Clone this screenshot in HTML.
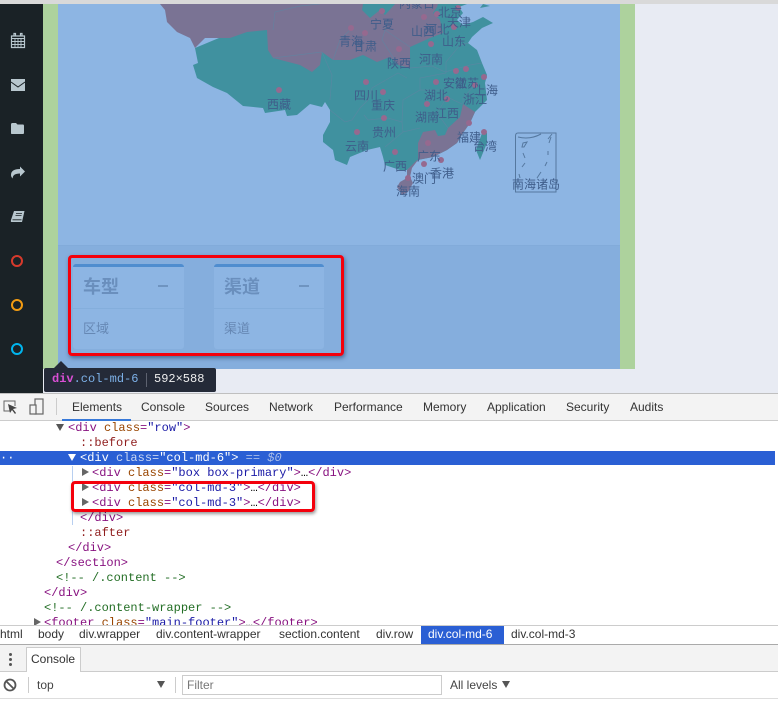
<!DOCTYPE html>
<html><head><meta charset="utf-8"><style>
html,body{margin:0;padding:0;background:#fff}
#p{position:relative;width:778px;height:708px;overflow:hidden;background:#fff;font-family:"Liberation Sans","Noto Sans CJK SC",sans-serif}
#p div,#p span.a,#p svg{position:absolute}
.t{font-size:12px;line-height:14px;color:#333;white-space:nowrap;position:absolute}
.c{position:absolute;left:0;font:12px/15px "Liberation Mono",monospace;white-space:pre;height:15px}
.g{color:#881280}.o{color:#994500}.b{color:#1a1aa6}.d{color:#8b2c8b}.m{color:#236e25}.r{color:#8f1d1d}
.ar{position:absolute;width:0;height:0;border-top:4px solid transparent;border-bottom:4px solid transparent;border-left:7px solid #666}
.dn{position:absolute;width:0;height:0;border-left:4px solid transparent;border-right:4px solid transparent;border-top:7px solid #555}
.card{background:#8db5e3;border-top:3px solid #4f8dcf;border-radius:3px;width:111px;height:82px;top:264px}
.card .h{position:absolute;left:10px;top:7px;font-weight:bold;font-size:18px;line-height:26px;color:#6a8fbd}
.card .l{position:absolute;left:0;right:0;top:41px;height:1px;background:#84aedc}
.card .x{position:absolute;left:10px;top:52px;font-size:13px;line-height:19px;color:#6688b4}
.card .s{position:absolute;left:85px;top:18px;width:10px;height:2px;background:#6f94c0}
</style></head><body><div id="p">
<div style="left:0;top:0;width:778px;height:393px;background:#e8ebf3"></div>
<div style="left:0;top:0;width:778px;height:4px;background:#d9d9d9"></div>
<div style="left:0;top:4px;width:43px;height:389px;background:#1a2226"></div>
<div style="left:43px;top:4px;width:592px;height:365px;background:#add29d"></div>
<div style="left:58px;top:4px;width:562px;height:365px;background:#8db5e3"></div>

<svg style="left:0;top:0" width="778" height="393" viewBox="0 0 778 393">
<defs><clipPath id="mc"><rect x="58" y="4" width="562" height="365"/></clipPath></defs>
<g clip-path="url(#mc)">
<g style="filter:blur(.3px)">
<path fill="#40919f" d="M195 48L198 63 193 65 197 78 213 87 227 93 243 106 263 108 265 113 285 110 287 116 297 115 310 104 322 107 325 102 330 110 330 122 323 135 323 142 333 150 335 160 347 165 350 157 367 150 380 147 383 157 385 165 400 170 407 170 418 160 433 157 447 150 457 143 463 133 470 123 475 112 487 100 485 83 487 75 482 63 477 50 468 43 472 37 482 28 493 23 483 17 473 22 463 25 457 20 463 13 459 7 467 4 300 4Z"/>
<path fill="#7a7394" d="M160 4L165 10 167 22 177 32 190 38 195 48 205 38 230 38 247 32 267 30 268 50 273 58 300 65 312 72 320 65 322 52 333 60 350 60 363 55 377 62 390 57 398 65 410 68 410 47 430 38 443 33 440 20 433 13 437 7 438 4 395 4 385 15 380 10 370 18 362 10 363 4Z"/>
<path fill="#7a7394" d="M475 112L470 123 463 133 457 143 447 150 433 157 417 160 407 170 407 178 400 182 397 187 402 195 408 192 413 183 410 177 412 168 418 160 418 143 423 132 435 130 438 136 445 135 448 128 460 117 463 104Z"/>
<path fill="#40919f" d="M482 133L487 133 487 143 480 160 476 150Z"/>
<path fill="#40919f" d="M483 4L490 6 480 8Z"/>
<g fill="none" stroke="#5f86a3" stroke-width=".7" opacity=".75">
<path d="M322 52L332 75 330 100M330 110L345 122 352 120 360 108 368 100 372 88 398 73 407 78M364 115L368 120 388 118 402 122 403 132 420 128M403 132L385 147M402 122L403 100 420 90 440 90 447 97 462 104M432 66L445 72 470 65 482 63M446 73L446 62 460 45 468 43M410 68L432 66M420 90L420 78 446 73M448 128L437 113 447 97M475 85L463 98 463 104M273 30L275 12 300 6 320 4M273 58L322 52M333 60L340 40 350 30M398 65L382 40 388 20M410 47L385 30"/>
</g>
<g fill="#96698f">
<circle cx="351" cy="28" r="3"/><circle cx="365" cy="33" r="3"/><circle cx="382" cy="11" r="3"/><circle cx="424" cy="17" r="3"/><circle cx="437" cy="14" r="3"/><circle cx="458" cy="8" r="3"/><circle cx="454" cy="27" r="3"/><circle cx="431" cy="44" r="3"/><circle cx="399" cy="49" r="3"/><circle cx="456" cy="71" r="3"/><circle cx="466" cy="69" r="3"/><circle cx="484" cy="77" r="3"/><circle cx="475" cy="85" r="3"/><circle cx="436" cy="82" r="3"/><circle cx="366" cy="82" r="3"/><circle cx="383" cy="92" r="3"/><circle cx="447" cy="99" r="3"/><circle cx="427" cy="104" r="3"/><circle cx="384" cy="118" r="3"/><circle cx="357" cy="132" r="3"/><circle cx="395" cy="152" r="3"/><circle cx="428" cy="143" r="3"/><circle cx="424" cy="164" r="3"/><circle cx="441" cy="160" r="3"/><circle cx="469" cy="123" r="3"/><circle cx="484" cy="132" r="3"/><circle cx="408" cy="178" r="3"/><circle cx="279" cy="90" r="3"/>
</g>
<g fill="none" stroke="#55789f" stroke-width="1">
<path d="M515.500 136Q515.500 133 518 133L556 133 556 192 515.500 192Z"/>
<path d="M518 137Q530 140 541 134M523 143L527 142 524 147 522 147ZM523 153L525 158M548 139L552 134M551 137L549 143M548 151L548 155M525 163L522 167M547 162L545 166M541 172L537 178M519 174L520 178"/>
</g>
</g>
<g font-family="'Liberation Sans','Noto Sans CJK SC',sans-serif" font-size="12" fill="#3f5d8a" text-anchor="middle" transform="translate(0,-.5)">
<text x="417" y="8">内蒙古</text><text x="382" y="29">宁夏</text><text x="351" y="46">青海</text><text x="365" y="51">甘肃</text><text x="423" y="36">山西</text><text x="437" y="34">河北</text><text x="450" y="17">北京</text><text x="459" y="27">天津</text><text x="454" y="46">山东</text><text x="431" y="64">河南</text><text x="399" y="68">陕西</text><text x="366" y="100">四川</text><text x="383" y="110">重庆</text><text x="436" y="100">湖北</text><text x="455" y="88">安徽</text><text x="467" y="88">江苏</text><text x="486" y="95">上海</text><text x="475" y="104">浙江</text><text x="447" y="118">江西</text><text x="427" y="122">湖南</text><text x="384" y="137">贵州</text><text x="357" y="151">云南</text><text x="469" y="142">福建</text><text x="485" y="151">台湾</text><text x="429" y="161">广东</text><text x="395" y="171">广西</text><text x="424" y="183">澳门</text><text x="442" y="178">香港</text><text x="408" y="196">海南</text><text x="536" y="189">南海诸岛</text><text x="279" y="109">西藏</text>
</g>
</g>
<g fill="#b8c7ce">
<path d="M11.500 36h13v11.500h-13zM14 36v-2.500h1.500v2.500M20.500 36v-2.500h1.500v2.500" fill="none" stroke="#b8c7ce" stroke-width="1.200"/>
<path d="M12 38.500h12M12 41.500h12M12 44.500h12M15 38v9M18 38v9M21 38v9" stroke="#b8c7ce" stroke-width=".9" fill="none"/>
<path d="M11 79h14v12h-14z"/><path d="M11 82l7 5 7-5" fill="none" stroke="#1a2226" stroke-width="1"/>
<path d="M11 124.500q0-1.500 1.500-1.500h3.500l1.500 1.500h5.500q1 0 1 1.500v7q0 1-1 1h-11.500q-.5 0-.5-1z"/>
<path d="M25 171.500L20 166.500v2.500q-9 0-9 6 0 2 1.700 3.500-.2-5 7.300-5v3z"/>
<path d="M14 211h10.500l-2.500 11H11.500q-1 0-.5-2z"/>
<path d="M16 213.500h6M15.500 215.500h6M12.500 219.800h9" stroke="#1a2226" stroke-width=".8" fill="none"/>
</g>
<g fill="none" stroke-width="2"><circle cx="17" cy="261" r="5" stroke="#d73a2c"/><circle cx="17" cy="305" r="5" stroke="#f39c12"/><circle cx="17" cy="349" r="5" stroke="#00b5ee"/></g>
</svg>

<div style="left:58px;top:245px;width:562px;height:124px;background:#85aedd;border-top:1px solid #82abda;box-sizing:border-box"></div>
<div class="card" style="left:73px;box-sizing:content-box"><span class="h">车型</span><span class="s"></span><span class="l"></span><span class="x">区域</span></div>
<div class="card" style="left:214px;width:110px"><span class="h">渠道</span><span class="s"></span><span class="l"></span><span class="x">渠道</span></div>
<div style="left:68px;top:255px;width:276px;height:101px;box-sizing:border-box;border:3.500px solid #f4000c;border-radius:4px;box-shadow:1px 2px 4px rgba(30,50,90,.55)"></div>

<div style="left:53px;top:361px;width:0;height:0;border-left:8px solid transparent;border-right:8px solid transparent;border-bottom:8px solid #242a38"></div>
<div style="left:44px;top:368px;width:172px;height:24px;background:#242a38;border-radius:2px"></div>
<span class="c" style="left:52px;top:372px;color:#7db1e8"><span style="color:#d94fd5;font-weight:bold">div</span>.col-md-6</span>
<div style="left:146px;top:373px;width:1px;height:14px;background:#5d6270"></div>
<span class="c" style="left:154px;top:372px;color:#eee">592×588</span>

<div style="left:0;top:393px;width:778px;height:28px;background:#f3f3f3;border-top:1px solid #bfbfbf;border-bottom:1px solid #ccc;box-sizing:border-box"></div>
<svg style="left:0;top:396px" width="50" height="22" viewBox="0 396 50 22">
<path d="M10 411H4V401h11v5" fill="none" stroke="#666" stroke-width="1"/><path d="M8 404l9 4-4 1 3 4-1 1-3-4-2 3z" fill="#444"/>
<rect x="35" y="399" width="8" height="15" fill="none" stroke="#666" stroke-width="1.200"/><rect x="30" y="405" width="6" height="9" fill="#f3f3f3" stroke="#666" stroke-width="1.200"/>
</svg>
<div style="left:56px;top:398px;width:1px;height:17px;background:#ccc"></div>
<span class="t" style="left:72px;top:400px">Elements</span>
<span class="t" style="left:141px;top:400px">Console</span>
<span class="t" style="left:205px;top:400px">Sources</span>
<span class="t" style="left:269px;top:400px">Network</span>
<span class="t" style="left:334px;top:400px">Performance</span>
<span class="t" style="left:423px;top:400px">Memory</span>
<span class="t" style="left:487px;top:400px">Application</span>
<span class="t" style="left:566px;top:400px">Security</span>
<span class="t" style="left:630px;top:400px">Audits</span>
<div style="left:62px;top:419px;width:69px;height:2px;background:#3879d9"></div>

<div style="left:0;top:451px;width:775px;height:14px;background:#2a5fd4"></div>
<div style="left:72px;top:466px;width:1px;height:59px;background:#b8cff0"></div>
<span class="c" style="top:421px;left:68px;"><span class="g">&lt;div </span><span class="o">class</span><span class="g">=</span><span class="b">"row"</span><span class="g">&gt;</span></span>
<span class="dn" style="left:56px;top:424px"></span>
<span class="c r" style="top:436px;left:80px">::before</span>
<span class="c" style="top:451px;left:80px;color:#fff">&lt;div <span style="color:#c9d6f2">class=</span>"col-md-6"&gt; <span style="color:#a9bde8">== <i>$0</i></span></span>
<span class="dn" style="left:68px;top:454px;border-top-color:#fff"></span>
<span class="c" style="top:451px;left:0;color:#fff">··</span>
<span class="ar" style="left:82px;top:468px"></span>
<span class="c" style="top:466px;left:92px"><span class="g">&lt;div </span><span class="o">class</span><span class="g">=</span><span class="b">"box box-primary"</span><span class="g">&gt;</span>…<span class="g">&lt;/div&gt;</span></span>
<span class="ar" style="left:82px;top:483px"></span>
<span class="c" style="top:481px;left:92px"><span class="g">&lt;div </span><span class="o">class</span><span class="g">=</span><span class="b">"col-md-3"</span><span class="g">&gt;</span>…<span class="g">&lt;/div&gt;</span></span>
<span class="ar" style="left:82px;top:498px"></span>
<span class="c" style="top:496px;left:92px"><span class="g">&lt;div </span><span class="o">class</span><span class="g">=</span><span class="b">"col-md-3"</span><span class="g">&gt;</span>…<span class="g">&lt;/div&gt;</span></span>
<span class="c g" style="top:511px;left:80px">&lt;/div&gt;</span>
<span class="c r" style="top:526px;left:80px">::after</span>
<span class="c g" style="top:541px;left:68px">&lt;/div&gt;</span>
<span class="c g" style="top:556px;left:56px">&lt;/section&gt;</span>
<span class="c m" style="top:571px;left:56px">&lt;!-- /.content --&gt;</span>
<span class="c g" style="top:586px;left:44px">&lt;/div&gt;</span>
<span class="c m" style="top:601px;left:44px">&lt;!-- /.content-wrapper --&gt;</span>
<span class="ar" style="left:34px;top:618px"></span>
<span class="c" style="top:616px;left:44px"><span class="g">&lt;footer </span><span class="o">class</span><span class="g">=</span><span class="b">"main-footer"</span><span class="g">&gt;</span>…<span class="g">&lt;/footer&gt;</span></span>
<div style="left:71px;top:481px;width:244px;height:31px;box-sizing:border-box;border:3px solid #f4000c;border-radius:4px;box-shadow:1px 2px 3px rgba(0,0,0,.4)"></div>

<div style="left:0;top:625px;width:778px;height:20px;background:#fff;border-top:1px solid #ccc;border-bottom:1px solid #aaa;box-sizing:border-box"></div>
<span class="t" style="left:0;top:627px">html</span>
<span class="t" style="left:38px;top:627px">body</span>
<span class="t" style="left:79px;top:627px">div.wrapper</span>
<span class="t" style="left:156px;top:627px">div.content-wrapper</span>
<span class="t" style="left:279px;top:627px">section.content</span>
<span class="t" style="left:376px;top:627px">div.row</span>
<div style="left:421px;top:626px;width:83px;height:18px;background:#2a5fd4"></div>
<span class="t" style="left:428px;top:627px;color:#fff">div.col-md-6</span>
<span class="t" style="left:511px;top:627px">div.col-md-3</span>

<div style="left:0;top:645px;width:778px;height:27px;background:#f3f3f3;border-bottom:1px solid #ccc;box-sizing:border-box"></div>
<div style="left:9px;top:653px;width:3px;height:3px;background:#555;border-radius:50%"></div>
<div style="left:9px;top:658px;width:3px;height:3px;background:#555;border-radius:50%"></div>
<div style="left:9px;top:663px;width:3px;height:3px;background:#555;border-radius:50%"></div>
<div style="left:26px;top:647px;width:55px;height:25px;background:#fff;border:1px solid #ccc;border-bottom:0;box-sizing:border-box"></div>
<span class="t" style="left:31px;top:652px">Console</span>

<svg style="left:2px;top:678px" width="16" height="14" viewBox="0 0 16 14"><circle cx="8" cy="7" r="5.500" fill="none" stroke="#555" stroke-width="1.800"/><path d="M4 3l8 8" stroke="#555" stroke-width="1.800"/></svg>
<div style="left:28px;top:677px;width:1px;height:16px;background:#ccc"></div>
<span class="t" style="left:37px;top:678px;color:#444">top</span>
<span class="dn" style="left:157px;top:681px"></span>
<div style="left:175px;top:677px;width:1px;height:16px;background:#ccc"></div>
<div style="left:182px;top:675px;width:260px;height:20px;box-sizing:border-box;border:1px solid #ccc;background:#fff"></div>
<span class="t" style="left:187px;top:678px;color:#777">Filter</span>
<span class="t" style="left:450px;top:678px;color:#444">All levels</span>
<span class="dn" style="left:502px;top:681px"></span>
<div style="left:0;top:698px;width:778px;height:1px;background:#ddd"></div>
</div></body></html>
